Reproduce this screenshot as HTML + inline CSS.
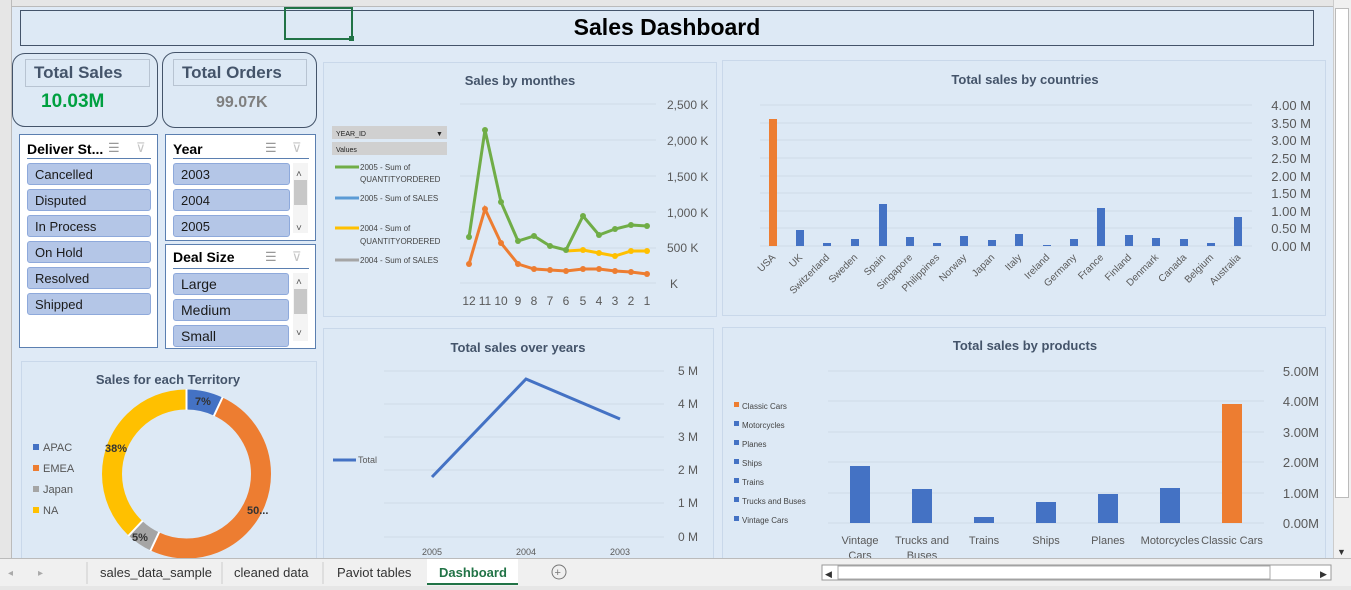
<!DOCTYPE html>
<html><head><meta charset="utf-8"><style>
*{margin:0;padding:0;box-sizing:border-box}
body{width:1351px;height:590px;overflow:hidden;background:#dfeaf6;font-family:"Liberation Sans",Arial,sans-serif;position:relative}
.a{position:absolute}
.card{border:1.5px solid #44546a;border-radius:13px;background:#dde9f5}
.lbl{border:1px solid #b8c4d2;color:#44546a;font-weight:bold;font-size:17px;padding-left:8px;line-height:26px}
.sl{background:#fff;border:1px solid #5b7fb0}
.sh{font-weight:bold;font-size:14px;color:#000;left:7px;top:6px}
.btn{position:absolute;background:#b4c6e7;border:1px solid #8ea9db;border-radius:3px;height:22px;font-size:13px;color:#1a1a1a;padding-left:7px;line-height:21px}
.sb{position:absolute;background:#f4f4f4;width:15px}
.chart{border:1px solid #c9d8ea;background:#dde9f5}
</style></head><body>
<div class="a" style="left:0;top:0;width:1351px;height:7px;background:#e6e6e6;border-bottom:1px solid #bbb"></div>
<div class="a" style="left:0;top:0;width:12px;height:590px;background:#e6e6e6;border-right:1px solid #bbb"></div>
<div class="a" style="left:1333px;top:0;width:18px;height:558px;background:#f0f0f0;border-left:1px solid #ccc"></div>
<div class="a" style="left:1335px;top:8px;width:14px;height:490px;background:#fff;border:1px solid #bbb"></div>
<div class="a" style="left:20px;top:10px;width:1294px;height:36px;border:1.5px solid #44546a;background:#dde9f5;text-align:center;font-weight:bold;font-size:23px;line-height:33px;color:#000">Sales Dashboard</div>
<div class="a" style="left:284px;top:7px;width:69px;height:33px;border:2px solid #217346"></div>
<div class="a" style="left:349px;top:36px;width:5px;height:5px;background:#217346"></div>
<div class="a card" style="left:12px;top:53px;width:146px;height:74px"></div>
<div class="a lbl" style="left:25px;top:59px;width:125px;height:28px">Total Sales</div>
<div class="a" style="left:41px;top:91px;font-size:19px;font-weight:bold;color:#00a040">10.03M</div>
<div class="a card" style="left:162px;top:52px;width:155px;height:76px"></div>
<div class="a lbl" style="left:173px;top:59px;width:134px;height:27px;line-height:25px">Total Orders</div>
<div class="a" style="left:216px;top:94px;font-size:16px;font-weight:bold;color:#7f7f7f">99.07K</div>
<div class="a sl" style="left:19px;top:134px;width:139px;height:214px">
<div class="a sh">Deliver St...</div>
<div class="a" style="left:7px;top:23px;width:124px;height:1px;background:#5b7fb0"></div>
<div class="btn" style="left:7px;top:28px;width:124px">Cancelled</div>
<div class="btn" style="left:7px;top:54px;width:124px">Disputed</div>
<div class="btn" style="left:7px;top:80px;width:124px">In Process</div>
<div class="btn" style="left:7px;top:106px;width:124px">On Hold</div>
<div class="btn" style="left:7px;top:132px;width:124px">Resolved</div>
<div class="btn" style="left:7px;top:158px;width:124px">Shipped</div>
</div>
<div class="a sl" style="left:165px;top:134px;width:151px;height:107px;overflow:hidden">
<div class="a sh">Year</div>
<div class="a" style="left:7px;top:23px;width:136px;height:1px;background:#5b7fb0"></div>
<div class="btn" style="left:7px;top:28px;width:117px">2003</div>
<div class="btn" style="left:7px;top:54px;width:117px">2004</div>
<div class="btn" style="left:7px;top:80px;width:117px">2005</div>
<div class="sb" style="left:127px;top:28px;height:70px"></div>
<div class="a" style="left:128px;top:45px;width:13px;height:25px;background:#c8c8c8"></div>
</div>
<div class="a sl" style="left:165px;top:244px;width:151px;height:105px;overflow:hidden">
<div class="a sh" style="top:4px">Deal Size</div>
<div class="a" style="left:7px;top:23px;width:136px;height:1px;background:#5b7fb0"></div>
<div class="btn" style="left:7px;top:28px;width:116px;font-size:14px">Large</div>
<div class="btn" style="left:7px;top:54px;width:116px;font-size:14px">Medium</div>
<div class="btn" style="left:7px;top:80px;width:116px;font-size:14px">Small</div>
<div class="sb" style="left:127px;top:28px;height:68px"></div>
<div class="a" style="left:128px;top:44px;width:13px;height:25px;background:#c8c8c8"></div>
</div>
<div class="a chart" style="left:21px;top:361px;width:296px;height:200px"></div>
<div class="a chart" style="left:323px;top:62px;width:394px;height:255px"></div>
<div class="a chart" style="left:722px;top:60px;width:604px;height:256px"></div>
<div class="a chart" style="left:323px;top:328px;width:391px;height:235px"></div>
<div class="a chart" style="left:722px;top:327px;width:604px;height:236px"></div>

<svg class="a" style="left:0;top:0" width="1351" height="590" font-family="Liberation Sans, Arial, sans-serif">
<g fill="#999" font-size="13">
<text x="108" y="152">☰</text><text x="136" y="152" fill="#c4c4c4">⊽</text>
<text x="265" y="152">☰</text><text x="292" y="152" fill="#c4c4c4">⊽</text>
<text x="265" y="261">☰</text><text x="292" y="261" fill="#c4c4c4">⊽</text>
</g>
<g fill="#555" font-size="10"><text x="296" y="177">˄</text><text x="296" y="231">˅</text><text x="296" y="285">˄</text><text x="296" y="336">˅</text></g>

<text x="168" y="384" text-anchor="middle" font-size="13" font-weight="bold" fill="#44546a">Sales for each Territory</text>
<g transform="rotate(-90 186.5 474)" fill="none" stroke-width="20">
<circle cx="186.5" cy="474" r="74.5" stroke="#4472c4" stroke-dasharray="32.8 500"/>
<circle cx="186.5" cy="474" r="74.5" stroke="#ed7d31" stroke-dasharray="234 500" stroke-dashoffset="-32.8"/>
<circle cx="186.5" cy="474" r="74.5" stroke="#a5a5a5" stroke-dasharray="23.4 500" stroke-dashoffset="-266.8"/>
<circle cx="186.5" cy="474" r="74.5" stroke="#ffc000" stroke-dasharray="178 500" stroke-dashoffset="-290.2"/>
</g>
<g stroke="#fff" stroke-width="2">
<line x1="186.5" y1="389" x2="186.5" y2="410"/>
<line x1="213.8" y1="416" x2="222.7" y2="397"/>
<line x1="159.2" y1="532" x2="150.3" y2="551"/>
<line x1="142.7" y1="520.7" x2="128.3" y2="536"/>
</g>
<g font-size="11" font-weight="bold" fill="#333">
<text x="195" y="405">7%</text><text x="105" y="452">38%</text><text x="247" y="514">50...</text><text x="132" y="541">5%</text>
</g>
<g font-size="11" fill="#555">
<rect x="33" y="444" width="6" height="6" fill="#4472c4"/><text x="43" y="451">APAC</text>
<rect x="33" y="465" width="6" height="6" fill="#ed7d31"/><text x="43" y="472">EMEA</text>
<rect x="33" y="486" width="6" height="6" fill="#a5a5a5"/><text x="43" y="493">Japan</text>
<rect x="33" y="507" width="6" height="6" fill="#ffc000"/><text x="43" y="514">NA</text>
</g>

<text x="520" y="85" text-anchor="middle" font-size="13" font-weight="bold" fill="#44546a">Sales by monthes</text>
<g stroke="#cfdae6" stroke-width="1">
<line x1="460" y1="104" x2="656" y2="104"/><line x1="460" y1="140" x2="656" y2="140"/><line x1="460" y1="176" x2="656" y2="176"/><line x1="460" y1="212" x2="656" y2="212"/><line x1="460" y1="248" x2="656" y2="248"/><line x1="460" y1="283" x2="656" y2="283"/>
</g>
<g font-size="12" fill="#595959">
<text x="667" y="109">2,500 K</text><text x="667" y="145">2,000 K</text><text x="667" y="181">1,500 K</text><text x="667" y="217">1,000 K</text><text x="667" y="252">500 K</text><text x="670" y="288">K</text>
</g>
<g font-size="12" fill="#595959" text-anchor="middle">
<text x="469" y="305">12</text><text x="485" y="305">11</text><text x="501" y="305">10</text><text x="518" y="305">9</text><text x="534" y="305">8</text><text x="550" y="305">7</text><text x="566" y="305">6</text><text x="583" y="305">5</text><text x="599" y="305">4</text><text x="615" y="305">3</text><text x="631" y="305">2</text><text x="647" y="305">1</text>
</g>
<polyline fill="none" stroke="#ffc000" stroke-width="3" points="566,251 583,250 599,253 615,256 631,251 647,251"/>
<polyline fill="none" stroke="#ed7d31" stroke-width="3" points="469,264 485,209 501,243 518,264 534,269 550,270 566,271 583,269 599,269 615,271 631,272 647,274"/>
<polyline fill="none" stroke="#70ad47" stroke-width="3" points="469,237 485,130 501,202 518,241 534,236 550,246 566,250 583,216 599,235 615,229 631,225 647,226"/>
<g fill="#70ad47"><circle cx="469" cy="237" r="3"/><circle cx="485" cy="130" r="3"/><circle cx="501" cy="202" r="3"/><circle cx="518" cy="241" r="3"/><circle cx="534" cy="236" r="3"/><circle cx="550" cy="246" r="3"/><circle cx="566" cy="250" r="3"/><circle cx="583" cy="216" r="3"/><circle cx="599" cy="235" r="3"/><circle cx="615" cy="229" r="3"/><circle cx="631" cy="225" r="3"/><circle cx="647" cy="226" r="3"/></g>
<g fill="#ed7d31"><circle cx="469" cy="264" r="3"/><circle cx="485" cy="209" r="3"/><circle cx="501" cy="243" r="3"/><circle cx="518" cy="264" r="3"/><circle cx="534" cy="269" r="3"/><circle cx="550" cy="270" r="3"/><circle cx="566" cy="271" r="3"/><circle cx="583" cy="269" r="3"/><circle cx="599" cy="269" r="3"/><circle cx="615" cy="271" r="3"/><circle cx="631" cy="272" r="3"/><circle cx="647" cy="274" r="3"/></g>
<g fill="#ffc000"><circle cx="583" cy="250" r="3"/><circle cx="599" cy="253" r="3"/><circle cx="615" cy="256" r="3"/><circle cx="631" cy="251" r="3"/><circle cx="647" cy="251" r="3"/></g>
<rect x="332" y="126" width="115" height="13" fill="#d0d0d0"/><text x="336" y="136" font-size="7" fill="#222">YEAR_ID</text><text x="436" y="136" font-size="7" fill="#222">▼</text>
<rect x="332" y="142" width="115" height="13" fill="#d0d0d0"/><text x="336" y="152" font-size="7" fill="#222">Values</text>
<g font-size="8" fill="#444">
<line x1="335" y1="167" x2="359" y2="167" stroke="#70ad47" stroke-width="3"/><text x="360" y="170">2005 - Sum of</text><text x="360" y="182">QUANTITYORDERED</text>
<line x1="335" y1="198" x2="359" y2="198" stroke="#5b9bd5" stroke-width="3"/><text x="360" y="201">2005 - Sum of SALES</text>
<line x1="335" y1="228" x2="359" y2="228" stroke="#ffc000" stroke-width="3"/><text x="360" y="231">2004 - Sum of</text><text x="360" y="244">QUANTITYORDERED</text>
<line x1="335" y1="260" x2="359" y2="260" stroke="#a5a5a5" stroke-width="3"/><text x="360" y="263">2004 - Sum of SALES</text>
</g>

<text x="1025" y="84" text-anchor="middle" font-size="13" font-weight="bold" fill="#44546a">Total sales by countries</text>
<g stroke="#cfdae6"><line x1="760" y1="105" x2="1252" y2="105"/><line x1="760" y1="123" x2="1252" y2="123"/><line x1="760" y1="140" x2="1252" y2="140"/><line x1="760" y1="158" x2="1252" y2="158"/><line x1="760" y1="176" x2="1252" y2="176"/><line x1="760" y1="193" x2="1252" y2="193"/><line x1="760" y1="211" x2="1252" y2="211"/><line x1="760" y1="228" x2="1252" y2="228"/><line x1="760" y1="246" x2="1252" y2="246"/></g>
<g font-size="13" fill="#595959" text-anchor="end"><text x="1311" y="110">4.00 M</text><text x="1311" y="128">3.50 M</text><text x="1311" y="145">3.00 M</text><text x="1311" y="163">2.50 M</text><text x="1311" y="181">2.00 M</text><text x="1311" y="198">1.50 M</text><text x="1311" y="216">1.00 M</text><text x="1311" y="233">0.50 M</text><text x="1311" y="251">0.00 M</text></g>
<rect x="769" y="119" width="8" height="127" fill="#ed7d31"/>
<g fill="#4472c4">
<rect x="796" y="230" width="8" height="16"/><rect x="823" y="243" width="8" height="3"/><rect x="851" y="239" width="8" height="7"/><rect x="879" y="204" width="8" height="42"/><rect x="906" y="237" width="8" height="9"/><rect x="933" y="243" width="8" height="3"/><rect x="960" y="236" width="8" height="10"/><rect x="988" y="240" width="8" height="6"/><rect x="1015" y="234" width="8" height="12"/><rect x="1043" y="245" width="8" height="1"/><rect x="1070" y="239" width="8" height="7"/><rect x="1097" y="208" width="8" height="38"/><rect x="1125" y="235" width="8" height="11"/><rect x="1152" y="238" width="8" height="8"/><rect x="1180" y="239" width="8" height="7"/><rect x="1207" y="243" width="8" height="3"/><rect x="1234" y="217" width="8" height="29"/>
</g>
<g font-size="10" fill="#595959" text-anchor="end">
<text transform="translate(776,258) rotate(-45)">USA</text><text transform="translate(803,258) rotate(-45)">UK</text><text transform="translate(830,258) rotate(-45)">Switzerland</text><text transform="translate(858,258) rotate(-45)">Sweden</text><text transform="translate(886,258) rotate(-45)">Spain</text><text transform="translate(913,258) rotate(-45)">Singapore</text><text transform="translate(940,258) rotate(-45)">Philippines</text><text transform="translate(967,258) rotate(-45)">Norway</text><text transform="translate(995,258) rotate(-45)">Japan</text><text transform="translate(1022,258) rotate(-45)">Italy</text><text transform="translate(1050,258) rotate(-45)">Ireland</text><text transform="translate(1077,258) rotate(-45)">Germany</text><text transform="translate(1104,258) rotate(-45)">France</text><text transform="translate(1132,258) rotate(-45)">Finland</text><text transform="translate(1159,258) rotate(-45)">Denmark</text><text transform="translate(1187,258) rotate(-45)">Canada</text><text transform="translate(1214,258) rotate(-45)">Belgium</text><text transform="translate(1241,258) rotate(-45)">Australia</text>
</g>

<text x="518" y="352" text-anchor="middle" font-size="13" font-weight="bold" fill="#44546a">Total sales over years</text>
<g stroke="#cfdae6"><line x1="384" y1="371" x2="664" y2="371"/><line x1="384" y1="404" x2="664" y2="404"/><line x1="384" y1="437" x2="664" y2="437"/><line x1="384" y1="470" x2="664" y2="470"/><line x1="384" y1="503" x2="664" y2="503"/><line x1="384" y1="537" x2="664" y2="537"/></g>
<g font-size="12" fill="#595959"><text x="678" y="375">5 M</text><text x="678" y="408">4 M</text><text x="678" y="441">3 M</text><text x="678" y="474">2 M</text><text x="678" y="507">1 M</text><text x="678" y="541">0 M</text></g>
<polyline fill="none" stroke="#4472c4" stroke-width="3" points="432,477 526,379 620,419"/>
<g font-size="9" fill="#595959" text-anchor="middle"><text x="432" y="555">2005</text><text x="526" y="555">2004</text><text x="620" y="555">2003</text></g>
<line x1="333" y1="460" x2="356" y2="460" stroke="#4472c4" stroke-width="3"/><text x="358" y="463" font-size="9" fill="#595959">Total</text>

<text x="1025" y="350" text-anchor="middle" font-size="13" font-weight="bold" fill="#44546a">Total sales by products</text>
<g stroke="#cfdae6"><line x1="828" y1="371" x2="1264" y2="371"/><line x1="828" y1="401" x2="1264" y2="401"/><line x1="828" y1="432" x2="1264" y2="432"/><line x1="828" y1="462" x2="1264" y2="462"/><line x1="828" y1="493" x2="1264" y2="493"/><line x1="828" y1="523" x2="1264" y2="523"/></g>
<g font-size="13" fill="#595959" text-anchor="end"><text x="1319" y="376">5.00M</text><text x="1319" y="406">4.00M</text><text x="1319" y="437">3.00M</text><text x="1319" y="467">2.00M</text><text x="1319" y="498">1.00M</text><text x="1319" y="528">0.00M</text></g>
<g fill="#4472c4"><rect x="850" y="466" width="20" height="57"/><rect x="912" y="489" width="20" height="34"/><rect x="974" y="517" width="20" height="6"/><rect x="1036" y="502" width="20" height="21"/><rect x="1098" y="494" width="20" height="29"/><rect x="1160" y="488" width="20" height="35"/></g>
<rect x="1222" y="404" width="20" height="119" fill="#ed7d31"/>
<g font-size="11" fill="#595959" text-anchor="middle"><text x="860" y="544">Vintage</text><text x="860" y="559">Cars</text><text x="922" y="544">Trucks and</text><text x="922" y="559">Buses</text><text x="984" y="544">Trains</text><text x="1046" y="544">Ships</text><text x="1108" y="544">Planes</text><text x="1170" y="544">Motorcycles</text><text x="1232" y="544">Classic Cars</text></g>
<g font-size="8" fill="#444">
<rect x="734" y="402" width="5" height="5" fill="#ed7d31"/><text x="742" y="409">Classic Cars</text>
<rect x="734" y="421" width="5" height="5" fill="#4472c4"/><text x="742" y="428">Motorcycles</text>
<rect x="734" y="440" width="5" height="5" fill="#4472c4"/><text x="742" y="447">Planes</text>
<rect x="734" y="459" width="5" height="5" fill="#4472c4"/><text x="742" y="466">Ships</text>
<rect x="734" y="478" width="5" height="5" fill="#4472c4"/><text x="742" y="485">Trains</text>
<rect x="734" y="497" width="5" height="5" fill="#4472c4"/><text x="742" y="504">Trucks and Buses</text>
<rect x="734" y="516" width="5" height="5" fill="#4472c4"/><text x="742" y="523">Vintage Cars</text>
</g>

<rect x="0" y="558" width="1351" height="28" fill="#f0f0f0"/>
<rect x="0" y="586" width="1351" height="4" fill="#e6e6e6"/>
<line x1="0" y1="558.5" x2="1351" y2="558.5" stroke="#bbb"/>
<g fill="#aaa" font-size="10"><text x="8" y="576">◂</text><text x="38" y="576">▸</text></g>
<g stroke="#ccc"><line x1="87" y1="562" x2="87" y2="584"/><line x1="222" y1="562" x2="222" y2="584"/><line x1="323" y1="562" x2="323" y2="584"/></g>
<rect x="427" y="559" width="91" height="26" fill="#fff"/>
<line x1="427" y1="584" x2="518" y2="584" stroke="#217346" stroke-width="2"/>
<g font-size="13" fill="#333"><text x="100" y="577">sales_data_sample</text><text x="234" y="577">cleaned data</text><text x="337" y="577">Paviot tables</text></g>
<text x="439" y="577" font-size="13" font-weight="bold" fill="#217346">Dashboard</text>
<circle cx="559" cy="572" r="7" fill="none" stroke="#777"/><text x="554.5" y="576" font-size="11" fill="#777">+</text>
<rect x="822" y="565" width="509" height="15" fill="#fff" stroke="#999"/>
<rect x="838" y="566" width="432" height="13" fill="#fff" stroke="#aaa"/>
<text x="825" y="577" font-size="9" fill="#333">◀</text><text x="1320" y="577" font-size="9" fill="#333">▶</text>
<text x="1337" y="555" font-size="9" fill="#333">▼</text>
</svg>
</body></html>
